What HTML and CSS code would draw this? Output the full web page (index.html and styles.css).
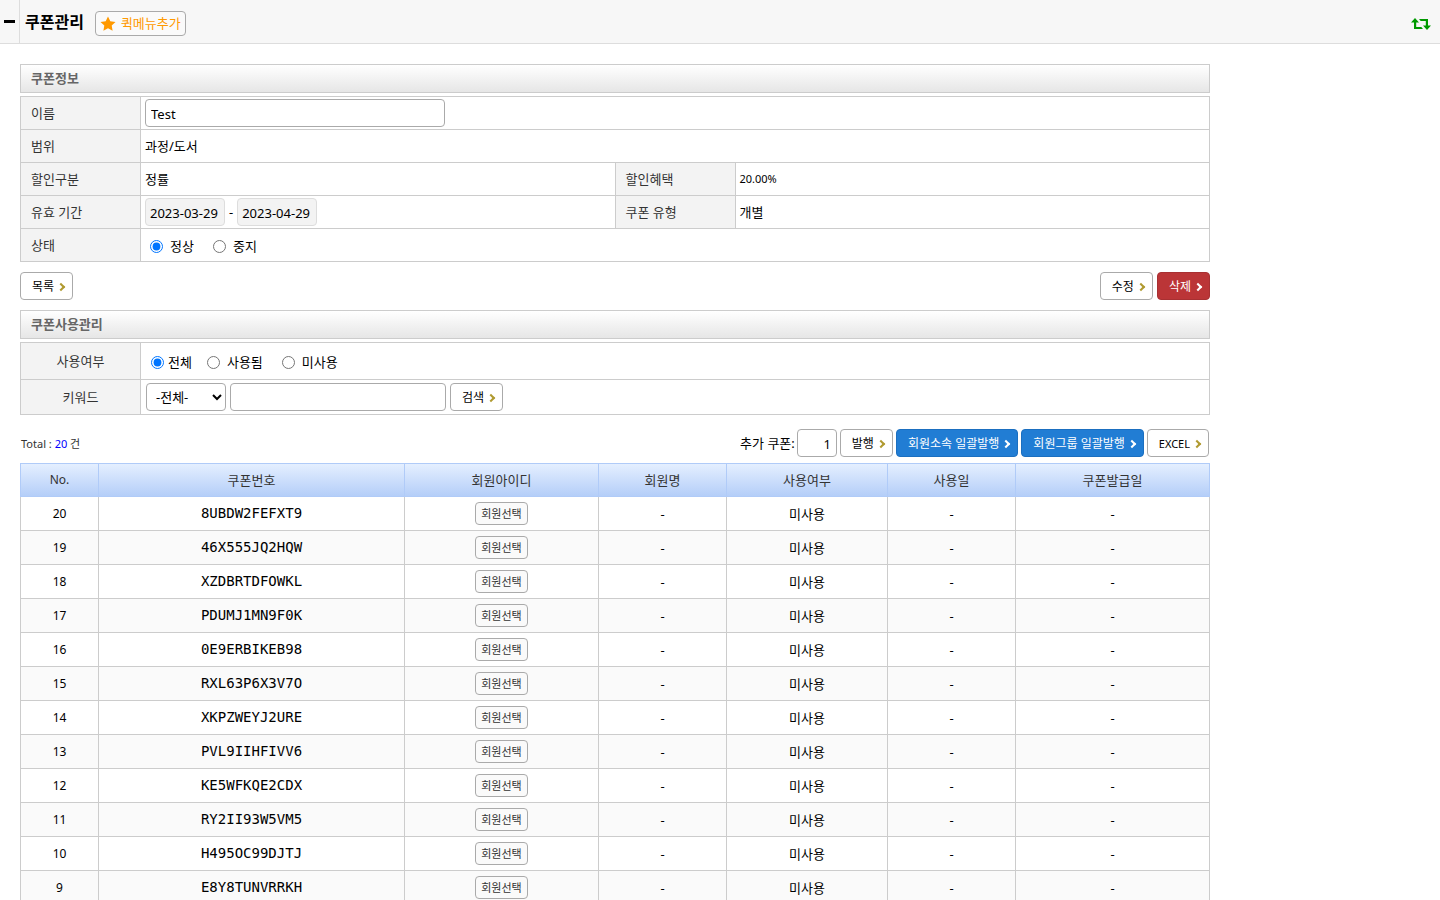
FILE: index.html
```html
<!DOCTYPE html>
<html lang="ko">
<head>
<meta charset="utf-8">
<title>쿠폰관리</title>
<link rel="stylesheet" href="styles.css">
</head>
<body>

<header class="topbar">
  <button type="button" class="menu-toggle" aria-label="메뉴 접기"><span></span></button>
  <h1>쿠폰관리</h1>
  <button type="button" class="quick">
    <svg width="16" height="15" viewBox="0 0 16 15"><path d="M8 .4l2.3 4.8 5.2.7-3.8 3.7.9 5.2L8 12.3l-4.600 2.500.9-5.200L.5 5.9l5.200-.7z"/></svg>
    퀵메뉴추가
  </button>
  <a href="#" class="refresh" aria-label="새로고침">
    <svg width="20" height="12" viewBox="0 0 20 12"><path d="M4 0L8 4.500H5.200V9H10.300L12 11H3V4.500H0zM16 12L12 7.500H14.800V3H9.700L8 1H17V7.500H20z"/></svg>
  </a>
</header>

<main class="content">
  <h2>쿠폰정보</h2>
  <table class="info">
    <colgroup><col class="label"><col><col class="label"><col></colgroup>
    <tr>
      <th><label for="name">이름</label></th>
      <td colspan="3"><input type="text" id="name" class="text name" value="Test"></td>
    </tr>
    <tr>
      <th>범위</th>
      <td colspan="3">과정/도서</td>
    </tr>
    <tr>
      <th>할인구분</th>
      <td>정률</td>
      <th>할인혜택</th>
      <td class="small">20.00%</td>
    </tr>
    <tr>
      <th>유효 기간</th>
      <td>
        <div class="period">
          <input type="text" class="text date" value="2023-03-29" aria-label="시작일" readonly>
          <span>-</span>
          <input type="text" class="text date" value="2023-04-29" aria-label="종료일" readonly>
        </div>
      </td>
      <th>쿠폰 유형</th>
      <td>개별</td>
    </tr>
    <tr>
      <th>상태</th>
      <td colspan="3">
        <div class="radios">
          <label><input type="radio" name="status" checked> 정상</label>
          <label><input type="radio" name="status"> 중지</label>
        </div>
      </td>
    </tr>
  </table>

  <div class="actions">
    <button type="button" class="btn">목록</button>
    <div class="group">
      <button type="button" class="btn">수정</button>
      <button type="button" class="btn red">삭제</button>
    </div>
  </div>

  <h2>쿠폰사용관리</h2>
  <table class="info filter">
    <colgroup><col class="label"><col></colgroup>
    <tr class="used">
      <th>사용여부</th>
      <td>
        <div class="radios">
          <label class="all"><input type="radio" name="used" checked> 전체</label>
          <label><input type="radio" name="used"> 사용됨</label>
          <label><input type="radio" name="used"> 미사용</label>
        </div>
      </td>
    </tr>
    <tr>
      <th><label for="keyword">키워드</label></th>
      <td>
        <div class="group">
          <select class="text" aria-label="검색 항목"><option>-전체-</option></select>
          <input type="text" id="keyword" class="text keyword">
          <button type="button" class="btn">검색</button>
        </div>
      </td>
    </tr>
  </table>

  <div class="toolbar">
    <p class="small">Total : <em>20</em> 건</p>
    <div class="group">
      <span class="add"><label for="count">추가 쿠폰:</label><input type="text" id="count" class="text count" value="1"></span>
      <button type="button" class="btn">발행</button>
      <button type="button" class="btn blue">회원소속 일괄발행</button>
      <button type="button" class="btn blue">회원그룹 일괄발행</button>
      <button type="button" class="btn small">EXCEL</button>
    </div>
  </div>

  <table class="list">
    <colgroup>
      <col class="c-no"><col class="c-code"><col class="c-id"><col class="c-name"><col class="c-used"><col class="c-date"><col class="c-issued">
    </colgroup>
    <thead>
      <tr><th class="no">No.</th><th>쿠폰번호</th><th>회원아이디</th><th>회원명</th><th>사용여부</th><th>사용일</th><th>쿠폰발급일</th></tr>
    </thead>
    <tbody>
      <tr><td class="no">20</td><td class="code">8UBDW2FEFXT9</td><td><button type="button" class="pick">회원선택</button></td><td>-</td><td>미사용</td><td>-</td><td>-</td></tr>
      <tr><td class="no">19</td><td class="code">46X555JQ2HQW</td><td><button type="button" class="pick">회원선택</button></td><td>-</td><td>미사용</td><td>-</td><td>-</td></tr>
      <tr><td class="no">18</td><td class="code">XZDBRTDFOWKL</td><td><button type="button" class="pick">회원선택</button></td><td>-</td><td>미사용</td><td>-</td><td>-</td></tr>
      <tr><td class="no">17</td><td class="code">PDUMJ1MN9F0K</td><td><button type="button" class="pick">회원선택</button></td><td>-</td><td>미사용</td><td>-</td><td>-</td></tr>
      <tr><td class="no">16</td><td class="code">0E9ERBIKEB98</td><td><button type="button" class="pick">회원선택</button></td><td>-</td><td>미사용</td><td>-</td><td>-</td></tr>
      <tr><td class="no">15</td><td class="code">RXL63P6X3V7O</td><td><button type="button" class="pick">회원선택</button></td><td>-</td><td>미사용</td><td>-</td><td>-</td></tr>
      <tr><td class="no">14</td><td class="code">XKPZWEYJ2URE</td><td><button type="button" class="pick">회원선택</button></td><td>-</td><td>미사용</td><td>-</td><td>-</td></tr>
      <tr><td class="no">13</td><td class="code">PVL9IIHFIVV6</td><td><button type="button" class="pick">회원선택</button></td><td>-</td><td>미사용</td><td>-</td><td>-</td></tr>
      <tr><td class="no">12</td><td class="code">KE5WFKQE2CDX</td><td><button type="button" class="pick">회원선택</button></td><td>-</td><td>미사용</td><td>-</td><td>-</td></tr>
      <tr><td class="no">11</td><td class="code">RY2II93W5VM5</td><td><button type="button" class="pick">회원선택</button></td><td>-</td><td>미사용</td><td>-</td><td>-</td></tr>
      <tr><td class="no">10</td><td class="code">H495OC99DJTJ</td><td><button type="button" class="pick">회원선택</button></td><td>-</td><td>미사용</td><td>-</td><td>-</td></tr>
      <tr><td class="no">9</td><td class="code">E8Y8TUNVRRKH</td><td><button type="button" class="pick">회원선택</button></td><td>-</td><td>미사용</td><td>-</td><td>-</td></tr>
    </tbody>
  </table>
</main>

</body>
</html>
```
FILE: styles.css
```css
*, *::after {
  box-sizing: border-box;
}

body {
  margin: 0;
  background: #fff;
  color: #000;
}

body, button, input, select {
  font-family: "Noto Sans", "Noto Sans CJK KR", sans-serif;
  font-size: 13px;
  line-height: 20px;
}

/* top bar */
.topbar {
  display: flex;
  align-items: center;
  height: 44px;
  padding-right: 9px;
  background: #f7f7f7;
  border-bottom: 1px solid #ddd;
}

.menu-toggle {
  align-self: stretch;
  width: 20px;
  padding: 0 0 0 4px;
  background: none;
  border: 0;
  border-right: 1px solid #ddd;
}

.menu-toggle span {
  display: block;
  width: 11px;
  height: 3px;
  background: #000;
}

h1 {
  margin: 0 11px 0 5px;
  font-size: 16px;
}

.quick {
  display: flex;
  align-items: center;
  gap: 5px;
  height: 25px;
  margin-top: 3px;
  padding: 0 4px;
  background: #fafafa;
  border: 1px solid #aaa;
  border-radius: 4px;
  color: #f90;
}

.quick svg {
  fill: #f90;
}

.refresh {
  display: flex;
  margin: 5px 0 0 auto;
}

.refresh svg {
  fill: #090;
}

/* content */
.content {
  max-width: 1230px;
  padding: 20px;
}

h2 {
  height: 29px;
  margin: 0 0 3px;
  padding: 0 10px;
  border: 1px solid #ccc;
  background: linear-gradient(#fff, #e6e6e6);
  color: #666;
  font-size: 13px;
  font-weight: bold;
  line-height: 27px;
}

table {
  width: 100%;
  border-collapse: collapse;
  table-layout: fixed;
}

th, td {
  border: 1px solid #ccc;
}

th {
  font-weight: normal;
  color: #333;
}

.label {
  width: 120px;
}

.info tr {
  height: 33px;
}

.info th {
  padding: 0 10px;
  background: #f3f3f3;
  text-align: left;
}

.info td {
  padding: 0 4px;
}

.filter tr {
  height: 35px;
}

.filter .used {
  height: 37px;
}

.filter th {
  text-align: center;
}

.filter td {
  padding: 0 5px;
}

.small {
  font-size: 11px;
}

.text {
  display: block;
  height: 28px;
  padding: 2px 5px 0;
  background: #fff;
  border: 1px solid #aaa;
  border-radius: 4px;
  color: #000;
}

.name {
  width: 300px;
}

.date {
  width: 80px;
  padding: 2px 4px 0;
  background: #f3f3f3;
  border-color: #ddd;
}

select.text {
  width: 80px;
  padding: 0 5px;
}

.keyword {
  width: 216px;
}

.count {
  width: 40px;
  text-align: right;
}

.period, .group, .add, .radios, .radios label {
  display: flex;
  align-items: center;
}

.period, .group {
  gap: 4px;
}

.radios {
  gap: 19px;
  padding: 2px 0 0 5px;
}

.radios label {
  gap: 7px;
}

.radios .all {
  gap: 4px;
  margin-right: -4px;
}

.radios input {
  width: 13px;
  height: 13px;
  margin: 0;
}

/* buttons */
.btn {
  display: flex;
  align-items: center;
  gap: 4px;
  height: 28px;
  padding: 1px 8px 0 11px;
  background: #fff;
  border: 1px solid #aaa;
  border-radius: 4px;
  color: #000;
  font-size: 12px;
  white-space: nowrap;
}

.btn::after {
  content: "";
  width: 6px;
  height: 6px;
  border: solid #b09a30;
  border-width: 2px 2px 0 0;
  transform: rotate(45deg);
}

.btn.small {
  font-size: 11px;
}

.red {
  background: #bb3537;
  border-color: #a83032;
  color: #fff;
}

.blue {
  background: #217dd4;
  border-color: #1b6fc0;
  color: #fff;
}

.red::after, .blue::after {
  border-color: #fff;
}

.actions, .toolbar {
  display: flex;
  justify-content: space-between;
  align-items: center;
}

.actions {
  margin: 10px 0;
}

.toolbar {
  margin: 14px 0 6px;
  padding: 0 1px;
}

.toolbar .group {
  gap: 3px;
}

.toolbar p {
  margin: 0;
  padding-top: 2px;
  color: #333;
}

.toolbar em {
  color: #00f;
  font-style: normal;
}

.add {
  gap: 2px;
}

/* coupon list */
.c-no { width: 78px; }
.c-code { width: 306px; }
.c-id { width: 194px; }
.c-name { width: 128px; }
.c-used { width: 161px; }
.c-date { width: 128px; }
.c-issued { width: 194px; }

.list {
  text-align: center;
}

.list tr {
  height: 34px;
}

.list thead tr {
  height: 33px;
  background: linear-gradient(#e4efff, #b3cdf8);
}

.list th {
  padding: 0;
  border-color: #b0cbf8;
}

.list td {
  padding: 0;
}

.list tbody tr:nth-child(even) {
  background: #fafafa;
}

.list .no {
  font-size: 12px;
}

.list .code {
  padding-bottom: 2px;
  font-family: "DejaVu Sans Mono", monospace;
  font-size: 14px;
}

.pick {
  display: block;
  height: 23px;
  margin: 0 auto;
  padding: 0 5px;
  background: #fafafa;
  border: 1px solid #aaa;
  border-radius: 4px;
  color: #333;
  font-size: 11px;
}
```
